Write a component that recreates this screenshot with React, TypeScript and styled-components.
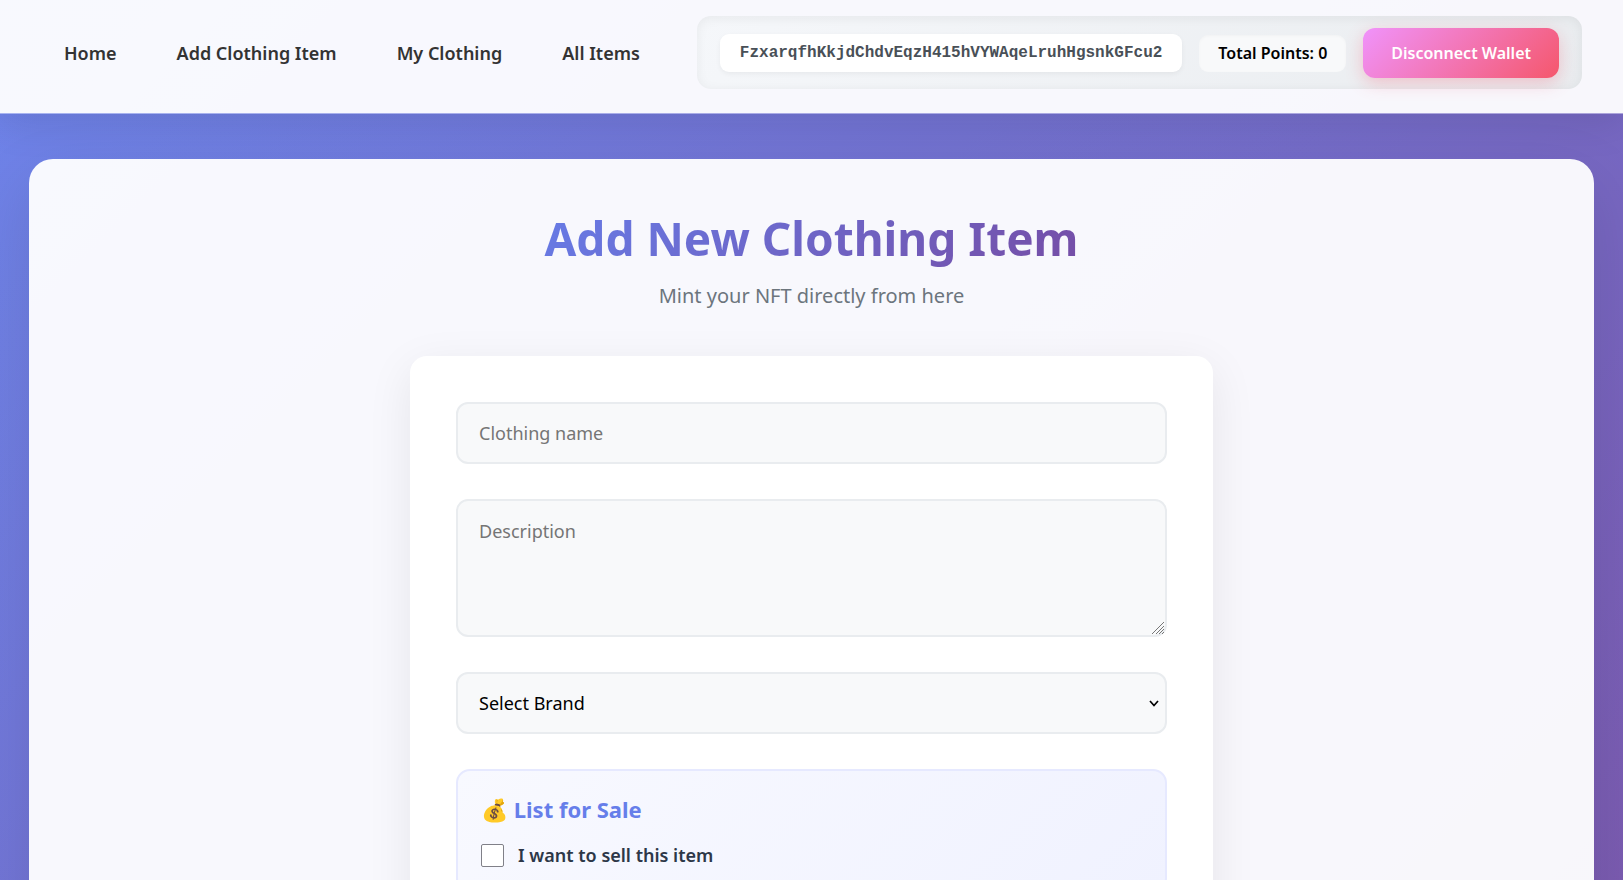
import React, { useState } from 'react';
import styled, { createGlobalStyle } from 'styled-components';

const GlobalStyle = createGlobalStyle`
  *, *::before, *::after { box-sizing: border-box; }
  body {
    margin: 0;
    min-height: 150vh;
    font-family: "Noto Sans", sans-serif;
    color: #333;
    background:
      linear-gradient(rgba(255, 255, 255, 0.05), rgba(255, 255, 255, 0.05)),
      linear-gradient(135deg, #667eea 0%, #764ba2 100%);
  }
  button, input, textarea, select { font-family: inherit; }
`;

const Header = styled.header`
  position: relative;
  display: flex;
  align-items: center;
  justify-content: space-between;
  padding: 16px 41px 24px;
  background: rgba(255, 255, 255, 0.95);
  border-bottom: 1px solid rgba(255, 255, 255, 0.4);
  background-clip: padding-box;
  box-shadow: 0 9px 37px rgba(0, 0, 0, 0.1);
`;

const Nav = styled.nav`
  display: flex;
  gap: 14px;
`;

const NavLink = styled.a`
  padding: 12px 23px;
  color: #333;
  font-size: 18px;
  font-weight: 600;
  line-height: 24px;
  text-decoration: none;
  white-space: nowrap;
`;

const Wallet = styled.div`
  display: flex;
  align-items: center;
  gap: 17px;
  padding: 12px 23px 11px;
  border-radius: 14px;
  background: linear-gradient(135deg, #f5f7fa 0%, #e9ecef 100%);
  box-shadow: inset 0 2px 12px rgba(0, 0, 0, 0.06);
`;

const Address = styled.span`
  padding: 9px 20px;
  border-radius: 9px;
  background: #fff;
  color: #495057;
  font-family: "Liberation Mono", monospace;
  font-size: 16px;
  font-weight: 600;
  line-height: 20px;
  box-shadow: 0 2px 5px rgba(0, 0, 0, 0.05);
`;

const Points = styled.span`
  padding: 7px 19px;
  border-radius: 9px;
  background: #f8f9fa;
  color: #000;
  font-size: 16px;
  font-weight: 600;
  line-height: 23px;
  white-space: nowrap;
  box-shadow: inset 0 1px 3px rgba(0, 0, 0, 0.03);
`;

const DisconnectButton = styled.button`
  padding: 14px 28px;
  border: 0;
  border-radius: 12px;
  background: linear-gradient(135deg, #f093fb 0%, #f5576c 100%);
  color: #fff;
  font-size: 16px;
  font-weight: 600;
  line-height: 22px;
  white-space: nowrap;
  box-shadow: 0 5px 17px rgba(245, 87, 108, 0.3);
  cursor: pointer;
`;

const Page = styled.main`
  margin: 45px 29px;
  padding: 47px 46px;
  border-radius: 24px;
  background: rgba(255, 255, 255, 0.95);
  box-shadow: 0 23px 69px rgba(0, 0, 0, 0.1);
`;

const Intro = styled.div`
  display: flex;
  flex-direction: column;
  align-items: center;
  gap: 12px;
  margin-bottom: 46px;
`;

const Title = styled.h1`
  margin: 0;
  padding: 0 32px;
  background: linear-gradient(135deg, #667eea, #764ba2);
  background-clip: text;
  -webkit-background-clip: text;
  color: transparent;
  font-size: 46px;
  font-weight: 700;
  line-height: 64px;
`;

const Subtitle = styled.p`
  margin: 0;
  color: #6c757d;
  font-size: 20px;
  line-height: 28px;
`;

const Form = styled.form`
  display: flex;
  flex-direction: column;
  gap: 35px;
  max-width: 803px;
  margin: 0 auto;
  padding: 46px;
  border-radius: 17px;
  background: #fff;
  box-shadow: 0 12px 46px rgba(0, 0, 0, 0.08);
`;

const fieldStyles = `
  display: block;
  width: 100%;
  border: 2px solid #e9ecef;
  border-radius: 12px;
  background: #f8f9fa;
  font-size: 18px;
  line-height: 25px;
  outline: none;
  &:focus { border-color: #667eea; }
`;

const TextInput = styled.input`
  ${fieldStyles}
  height: 62px;
  padding: 0 21px;
`;

const FieldStack = styled.div`
  display: grid;
  align-items: center;
`;

const TextArea = styled.textarea`
  ${fieldStyles}
  grid-area: 1 / 1;
  height: 138px;
  padding: 18px 21px;
  resize: vertical;
  &::-webkit-resizer { background: transparent; }
`;

const Grip = styled.svg`
  grid-area: 1 / 1;
  align-self: end;
  justify-self: end;
  z-index: 1;
  width: 12px;
  height: 12px;
  margin: 0 3px 3px 0;
  fill: none;
  stroke: #777;
  pointer-events: none;
`;

const Select = styled.select`
  ${fieldStyles}
  grid-area: 1 / 1;
  height: 62px;
  padding: 0 21px;
  color: #000;
  appearance: none;
`;

const Chevron = styled.svg`
  grid-area: 1 / 1;
  justify-self: end;
  z-index: 1;
  width: 10px;
  height: 7px;
  margin-right: 8px;
  fill: none;
  stroke: #000;
  stroke-width: 1.7;
  pointer-events: none;
`;

const SaleBox = styled.section`
  display: flex;
  flex-direction: column;
  gap: 18px;
  padding: 23px;
  border: 2px solid #e6e9ff;
  border-radius: 14px;
  background: linear-gradient(135deg, #f8f9ff 0%, #f0f2ff 100%);
`;

const SaleTitle = styled.h2`
  margin: 0;
  color: #667eea;
  font-size: 22px;
  font-weight: 700;
  line-height: 31px;
`;

const CheckLabel = styled.label`
  display: flex;
  align-items: center;
  gap: 14px;
  color: #2d3748;
  font-size: 18px;
  font-weight: 600;
  line-height: 25px;
`;

const Checkbox = styled.input`
  appearance: none;
  width: 23px;
  height: 23px;
  margin: 0;
  border: 1px solid #808088;
  border-radius: 2px;
  background: #fff;
  &:checked { background: #667eea; border-color: #667eea; }
`;

export default function App() {
  const [selling, setSelling] = useState(false);
  return (
    <>
      <GlobalStyle />
      <Header>
        <Nav>
          <NavLink href="#home">Home</NavLink>
          <NavLink href="#add">Add Clothing Item</NavLink>
          <NavLink href="#mine">My Clothing</NavLink>
          <NavLink href="#all">All Items</NavLink>
        </Nav>
        <Wallet>
          <Address>FzxarqfhKkjdChdvEqzH415hVYWAqeLruhHgsnkGFcu2</Address>
          <Points>Total Points: 0</Points>
          <DisconnectButton type="button">Disconnect Wallet</DisconnectButton>
        </Wallet>
      </Header>
      <Page>
        <Intro>
          <Title>Add New Clothing Item</Title>
          <Subtitle>Mint your NFT directly from here</Subtitle>
        </Intro>
        <Form>
          <TextInput type="text" placeholder="Clothing name" aria-label="Clothing name" />
          <FieldStack>
            <TextArea placeholder="Description" aria-label="Description" />
            <Grip viewBox="0 0 12 12" aria-hidden="true">
              <path d="M0 12 L12 0 M4 12 L12 4 M7 12 L12 7 M10 12 L12 10" />
            </Grip>
          </FieldStack>
          <FieldStack>
            <Select aria-label="Brand">
              <option>Select Brand</option>
            </Select>
            <Chevron viewBox="0 0 10 7" aria-hidden="true">
              <path d="M1 1 L5 5.5 L9 1" />
            </Chevron>
          </FieldStack>
          <SaleBox>
            <SaleTitle>💰 List for Sale</SaleTitle>
            <CheckLabel>
              <Checkbox
                type="checkbox"
                checked={selling}
                onChange={(e) => setSelling(e.target.checked)}
              />
              I want to sell this item
            </CheckLabel>
          </SaleBox>
        </Form>
      </Page>
    </>
  );
}
